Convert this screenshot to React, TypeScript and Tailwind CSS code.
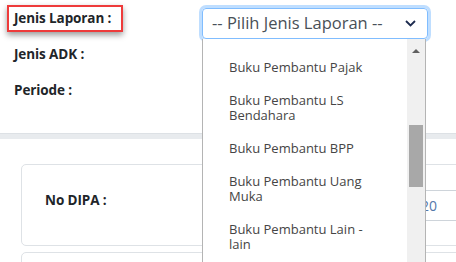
const options = [
  ["Buku Pembantu Pajak"],
  ["Buku Pembantu LS", "Bendahara"],
  ["Buku Pembantu BPP"],
  ["Buku Pembantu Uang", "Muka"],
  ["Buku Pembantu Lain -", "lain"],
]

export default function App() {
  return (
    <div className="relative w-[456px] h-[262px] overflow-hidden bg-white text-[#212529] font-['Open_Sans',sans-serif]">
      {/* form header */}
      <div className="flex h-[133px]">
        <div className="w-[202px] flex flex-col">
          <div className="mt-[5px] ml-[7px] w-[116px] h-[27px] border-2 border-[#ee3b3b] shadow-[0_3px_6px_rgba(0,0,0,0.4)] flex items-center pl-[5px] font-bold text-[13.5px] leading-[17px] tracking-[-0.1px]">
            Jenis Laporan :
          </div>
          <div className="mt-[14px] ml-[14px] font-bold text-[13.5px] leading-[17px] tracking-[-0.1px]">Jenis ADK :</div>
          <div className="mt-[19px] ml-[14px] font-bold text-[13.5px] leading-[17px] tracking-[-0.1px]">Periode :</div>
        </div>
        <div className="flex-1">
          <div className="mt-[8px] w-[226px] h-[31px] border border-[#80bdff] rounded-[4px] shadow-[0_0_0_3px_rgba(0,123,255,0.25)] flex items-center justify-between pl-[9px] pr-[11px] text-[16.5px] text-[#495057]">
            <span>-- Pilih Jenis Laporan --</span>
            <svg width="11" height="7" viewBox="0 0 11 7" fill="none">
              <path d="M1 1l4.5 4.5L10 1" stroke="#1d2b4f" strokeWidth="1.8" />
            </svg>
          </div>
        </div>
      </div>

      <div className="h-[6px] bg-[#e8ebee] border-t border-[#dde1e5]" />

      {/* body */}
      <div className="pt-[25px] pl-[21px]">
        <div className="h-[82px] w-[460px] border border-[#dee2e6] rounded-l-[5px] flex items-center">
          <div className="w-[208px] shrink-0 pl-[23px] mb-[10px] font-bold text-[13.5px] tracking-[-0.1px]">No DIPA :</div>
          <div className="w-[300px] shrink-0 h-[31px] border border-[#ced4da] rounded-[4px] flex items-center">
            <div className="w-[206px] shrink-0 text-right text-[14px] text-[#5577aa]">DIPA-2020</div>
          </div>
        </div>
        <div className="mt-[6px] h-[60px] w-[460px] border border-[#dee2e6] rounded-l-[5px]" />
      </div>

      {/* open select list */}
      <div className="absolute left-[202px] top-[39px] bottom-0 w-[224px] bg-white border-l border-r border-[#b4b4b4] flex">
        <div className="flex-1 pt-[12px] pl-[26px] text-[13px] leading-[15px] text-[#454545]">
          {options.map((lines, i) => (
            <div key={i} className="py-[9px]">
              {lines.map((l, j) => (
                <div key={j}>{l}</div>
              ))}
            </div>
          ))}
        </div>
        <div className="w-[18px] bg-[#f0f0f0] flex flex-col items-center">
          <div className="mt-[10px] w-0 h-0 border-l-[4px] border-r-[4px] border-b-[4px] border-l-transparent border-r-transparent border-b-[#606060]" />
          <div className="mt-[72px] w-[14px] h-[62px] bg-[#a8a8a8]" />
        </div>
      </div>
    </div>
  )
}
